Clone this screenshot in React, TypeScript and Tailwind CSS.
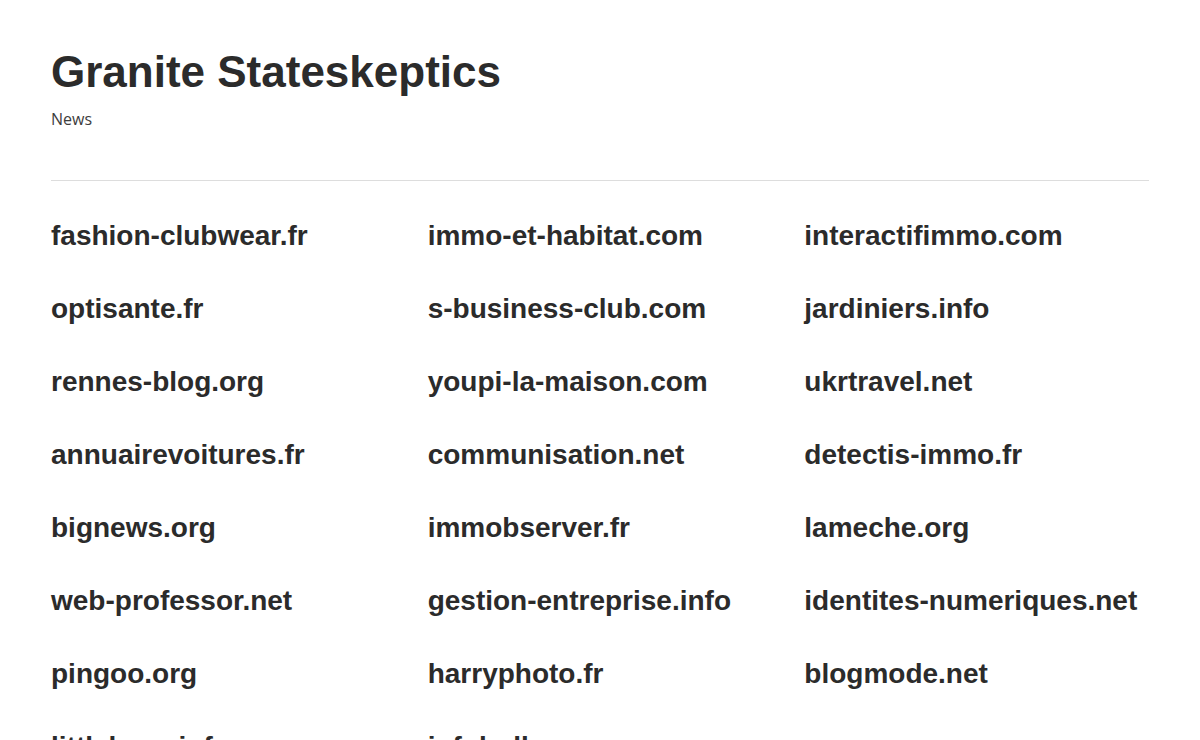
import React from 'react';

const sites: string[] = [
  'fashion-clubwear.fr',
  'immo-et-habitat.com',
  'interactifimmo.com',
  'optisante.fr',
  's-business-club.com',
  'jardiniers.info',
  'rennes-blog.org',
  'youpi-la-maison.com',
  'ukrtravel.net',
  'annuairevoitures.fr',
  'communisation.net',
  'detectis-immo.fr',
  'bignews.org',
  'immobserver.fr',
  'lameche.org',
  'web-professor.net',
  'gestion-entreprise.info',
  'identites-numeriques.net',
  'pingoo.org',
  'harryphoto.fr',
  'blogmode.net',
  'littlebuzz.info',
  'infobulle.com',
];

const App: React.FC = () => {
  return (
    <div className="min-h-screen bg-white px-[51px] pt-[50px] text-[#2b2b2b]">
      <header>
        <h1 className="font-['Liberation_Sans',Arial,sans-serif] text-[44px] font-bold leading-none">
          Granite Stateskeptics
        </h1>
        <p className="mt-[13px] font-['Open_Sans',sans-serif] text-[16px] leading-[24px] text-[#3d3d3d]">
          News
        </p>
      </header>

      <hr className="mt-[49px] border-0 border-t border-[#dddddd]" />

      <ul className="mt-[38px] grid grid-cols-3 gap-x-[32px] gap-y-[40px] font-['Liberation_Sans',Arial,sans-serif]">
        {sites.map((site) => (
          <li key={site} className="text-[28px] font-bold leading-[33px] whitespace-nowrap">
            <a href="#" className="text-[#2b2b2b]">
              {site}
            </a>
          </li>
        ))}
      </ul>
    </div>
  );
};

export default App;
